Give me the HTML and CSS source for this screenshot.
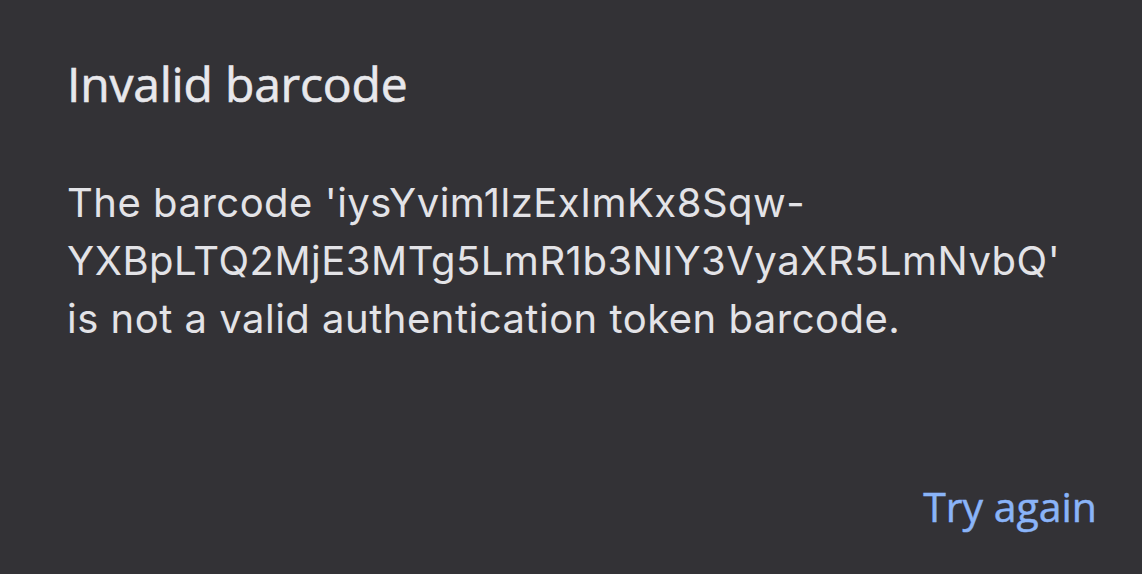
FILE: index.html
```html
<!DOCTYPE html>
<html>
<head>
<meta charset="utf-8">
<link rel="stylesheet" href="styles.css">
</head>
<body>
<div class="dialog">
  <h1 class="title">Invalid barcode</h1>
  <p class="message">The barcode 'iysYvim1lzExImKx8Sqw-<br>YXBpLTQ2MjE3MTg5LmR1b3NlY3VyaXR5LmNvbQ'<br>is not a valid authentication token barcode.</p>
  <div class="actions"><span class="button">Try again</span></div>
</div>
</body>
</html>
```
FILE: styles.css
```css
html, body {
  margin: 0;
  padding: 0;
  background: #333236;
  height: 100%;
}
.dialog {
  box-sizing: border-box;
  height: 574px;
  padding: 56px 45px 0 67px;
  display: flex;
  flex-direction: column;
}
.title {
  margin: 0;
  font-family: "Open Sans", sans-serif;
  font-weight: 400;
  font-size: 48px;
  line-height: 56px;
  letter-spacing: -0.2px;
  -webkit-text-stroke: 0.6px #e8e8ec;
  color: #e8e8ec;
}
.message {
  margin: 62px 0 0 0;
  font-family: Inter, sans-serif;
  font-size: 40px;
  line-height: 58px;
  letter-spacing: 0.5px;
  color: #e3e3e7;
}
.actions {
  margin-top: auto;
  margin-bottom: 40px;
  display: flex;
  justify-content: flex-end;
}
.button {
  font-family: "Open Sans", sans-serif;
  font-weight: 400;
  font-size: 41px;
  line-height: 56px;
  -webkit-text-stroke: 0.5px #8ab4f8;
  color: #8ab4f8;
}
```
